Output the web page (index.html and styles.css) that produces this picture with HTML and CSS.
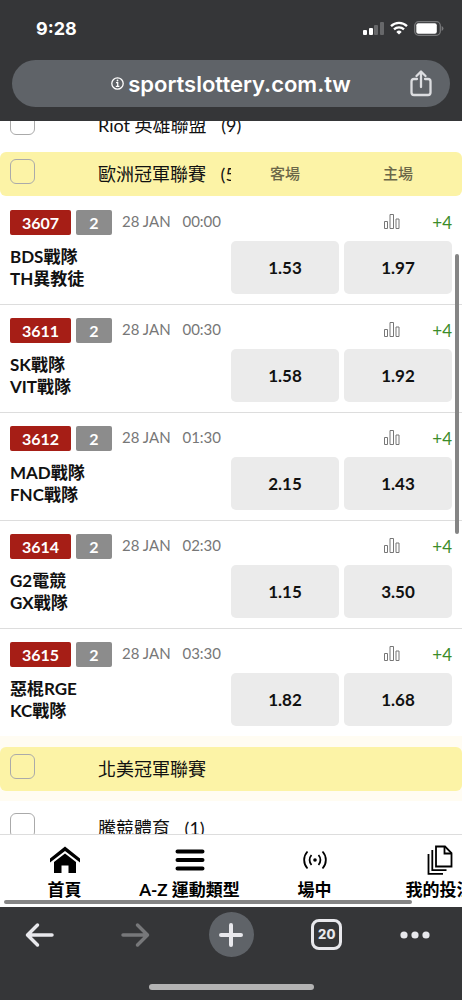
FILE: index.html
```
<!DOCTYPE html>
<html lang="zh-Hant">
<head>
    <meta charset="UTF-8">
    <meta name="viewport" content="width=device-width, initial-scale=1.0">
    <title>台灣運彩</title>
    <link rel="stylesheet" href="styles.css">
</head>
<body>
    <header class="browser-top">
        <div class="status-bar">
            <span class="time">9:28</span>
            <div class="status-icons">
                <svg width="21" height="14" viewBox="0 0 21 14" fill="#fff">
                    <rect x="0" y="9" width="4" height="5" rx="1"/>
                    <rect x="6" y="7" width="4" height="7" rx="1"/>
                    <rect x="11" y="4" width="4" height="10" rx="1" fill="#67686a"/>
                    <rect x="17" y="1" width="4" height="13" rx="1" fill="#67686a"/>
                </svg>
                <svg width="18" height="14" viewBox="0 0 18 14" fill="none" stroke="#fff" stroke-width="2.3">
                    <path d="M1 5.2a11.5 11.5 0 0 1 16 0"/>
                    <path d="M4 8.4a7.2 7.2 0 0 1 10 0"/>
                    <path d="M9 13.6 6.3 10.9a3.9 3.9 0 0 1 5.4 0z" fill="#fff" stroke="none"/>
                </svg>
                <svg width="30" height="15" viewBox="0 0 30 15">
                    <rect x=".7" y=".7" width="25.6" height="13.6" rx="4" fill="none" stroke="#77787a" stroke-width="1.3"/>
                    <rect x="2.3" y="2.3" width="20.5" height="10.4" rx="2" fill="#fff"/>
                    <path d="M27.6 5v5q1.9-.8 1.9-2.5T27.6 5z" fill="#77787a"/>
                </svg>
            </div>
        </div>
        <div class="url-bar">
            <a class="url" href="#">
                <svg width="13" height="13" viewBox="0 0 13 13" fill="none" stroke="#fff" stroke-width="1.3">
                    <circle cx="6.5" cy="6.5" r="5.7"/>
                    <path d="M5 5.6h1.7v3.6M4.8 9.3h3.6"/>
                    <circle cx="6.5" cy="3.5" r=".9" fill="#fff" stroke="none"/>
                </svg>
                <span>sportslottery.com.tw</span>
            </a>
            <button class="share" aria-label="分享">
                <svg width="22" height="27" viewBox="0 0 22 27" fill="none" stroke="#dcdde0" stroke-width="2.3" stroke-linecap="round" stroke-linejoin="round">
                    <path d="M7 9H4q-2.5 0-2.5 2.500v11Q1.5 25 4 25h14q2.500 0 2.500-2.500v-11Q20.500 9 18 9h-3"/>
                    <path d="M11 17V2M6.500 6 11 1.500 15.500 6"/>
                </svg>
            </button>
        </div>
    </header>

    <main class="page">
        <div class="list">
            <section class="league">
                <input type="checkbox" id="league-riot">
                <label for="league-riot">Riot 英雄聯盟 <span class="count">(9)</span></label>
            </section>

            <section class="league active with-odds">
                <input type="checkbox" id="league-eu">
                <label for="league-eu">歐洲冠軍聯賽 <span class="count">(5)</span></label>
                <span class="odds-title">客場</span>
                <span class="odds-title">主場</span>
            </section>

            <div id="matches"></div>

            <div class="highlight">
                <section class="league active">
                    <input type="checkbox" id="league-na">
                    <label for="league-na">北美冠軍聯賽</label>
                </section>
            </div>

            <section class="league">
                <input type="checkbox" id="league-tj">
                <label for="league-tj">騰競體育 <span class="count">(1)</span></label>
            </section>
        </div>
        <div class="scrollbar"></div>
    </main>

    <nav class="tabs">
        <div class="tab-list">
            <a class="tab" href="#">
                <svg width="30" height="28" viewBox="0 0 30 28">
                    <path d="M0 12.5 15 .5l15 12v4L15 5 0 16.5z"/>
                    <path d="M4 16 15 7.5 26 16v11h-7.5v-7.5h-7V27H4z"/>
                </svg>
                <span>首頁</span>
            </a>
            <a class="tab" href="#">
                <svg width="30" height="28" viewBox="0 0 30 28" stroke="#000" stroke-width="4" stroke-linecap="round">
                    <path d="M2.5 5.5h25M2.5 14h25M2.5 22.5h25"/>
                </svg>
                <span>A-Z 運動類型</span>
            </a>
            <a class="tab" href="#">
                <svg width="24" height="28" viewBox="0 0 24 28" fill="none" stroke="#000" stroke-width="1.8">
                    <path d="M4.5 5.5a12.5 12.5 0 0 0 0 17M19.5 5.5a12.5 12.5 0 0 1 0 17"/>
                    <path d="M8.5 9a7.5 7.5 0 0 0 0 10M15.5 9a7.5 7.5 0 0 1 0 10"/>
                    <circle cx="12" cy="14" r="1.8" fill="#000" stroke="none"/>
                </svg>
                <span>場中</span>
            </a>
            <a class="tab" href="#">
                <svg width="26" height="30" viewBox="0 0 26 30" fill="none" stroke="#000" stroke-width="1.8">
                    <path d="M9 1.5h9l6.5 6.5v13.5H9z"/>
                    <path d="M17.5 1.5V8.5h7"/>
                    <path d="M5.3 5v20.2h14.2M1.5 9v19.8h14.5"/>
                </svg>
                <span>我的投注</span>
            </a>
        </div>
        <div class="tab-scroll"></div>
    </nav>

    <footer class="browser-bottom">
        <div class="toolbar">
            <button aria-label="上一頁">
                <svg width="30" height="26" viewBox="0 0 30 26" fill="none" stroke="#e8e8ec" stroke-width="3.5" stroke-linecap="round" stroke-linejoin="round">
                    <path d="M27 13H3M12.5 3 2.5 13l10 10"/>
                </svg>
            </button>
            <button aria-label="下一頁">
                <svg width="30" height="26" viewBox="0 0 30 26" fill="none" stroke="#77787a" stroke-width="3.5" stroke-linecap="round" stroke-linejoin="round">
                    <path d="M3 13h24M17.5 3l10 10-10 10"/>
                </svg>
            </button>
            <button class="new-tab" aria-label="新分頁">
                <svg width="26" height="26" viewBox="0 0 26 26" stroke="#e8e8ec" stroke-width="4" stroke-linecap="round">
                    <path d="M13 3v20M3 13h20"/>
                </svg>
            </button>
            <button aria-label="分頁"><span class="tab-count">20</span></button>
            <button class="menu" aria-label="更多">
                <svg width="30" height="8" viewBox="0 0 30 8" fill="#e8e8ec">
                    <circle cx="4" cy="4" r="3.6"/>
                    <circle cx="15" cy="4" r="3.6"/>
                    <circle cx="26" cy="4" r="3.6"/>
                </svg>
            </button>
        </div>
        <div class="home-indicator"></div>
    </footer>

    <script src="script.js"></script>
</body>
</html>
```
FILE: styles.css
```
:root {
    --chrome: #353638;
    --chrome-light: #5f6368;
    --highlight: #fcf3a6;
    --red: #a61e16;
    --green: #3c8c2a;
}

* {
    box-sizing: border-box;
    margin: 0;
    padding: 0;
}

body {
    display: flex;
    flex-direction: column;
    height: 100vh;
    overflow: hidden;
    font-family: Lato, "Noto Sans CJK TC", sans-serif;
    color: #111;
    background-color: #fff;
}

button {
    border: none;
    background: none;
    font-family: inherit;
    cursor: pointer;
}

a {
    color: inherit;
    text-decoration: none;
}

svg {
    display: block;
}

/* Browser top */
.browser-top {
    flex: none;
    padding: 16px 12px 14px;
    color: #fff;
    background-color: var(--chrome);
    font-family: Inter, sans-serif;
}

.status-bar {
    display: flex;
    align-items: center;
    justify-content: space-between;
    height: 24px;
    padding: 0 6px 0 24px;
    margin-bottom: 20px;
}

.time {
    font-size: 18px;
    font-weight: 700;
}

.status-icons {
    display: flex;
    align-items: center;
    gap: 6px;
}

.url-bar {
    display: flex;
    align-items: center;
    height: 47px;
    padding: 0 18px;
    border-radius: 24px;
    background-color: var(--chrome-light);
}

.url {
    flex: 1;
    display: flex;
    align-items: center;
    justify-content: center;
    gap: 4px;
    padding-left: 22px;
    font-size: 22px;
    font-weight: 600;
}

/* Page */
.page {
    position: relative;
    flex: 1;
    min-height: 0;
    overflow: hidden;
}

/* list is scrolled a little under the browser bar */
.list {
    margin-top: -18px;
}

.league {
    display: flex;
    align-items: center;
    gap: 5px;
    height: 44px;
    padding: 0 10px;
    margin-bottom: 5px;
    border-radius: 6px;
}

.league.active {
    margin-bottom: 0;
    background-color: var(--highlight);
}

.league input {
    appearance: none;
    flex: none;
    align-self: flex-start;
    width: 25px;
    height: 25px;
    margin: 7px 58px 0 0;
    border: 1px solid #aaa;
    border-radius: 6px;
}

.league label {
    flex: 1;
    min-width: 0;
    overflow: hidden;
    white-space: nowrap;
    font-size: 18px;
    line-height: 28px;
}

.with-odds label {
    margin-right: -5px;
}

.count {
    margin-left: 10px;
}

.odds-title {
    flex: none;
    width: 108px;
    padding-bottom: 3px;
    text-align: center;
    font-size: 15px;
    font-weight: 500;
    color: #6b6748;
}

.highlight {
    padding: 11px 0 10px;
    margin-bottom: 5px;
    background-color: #fffcf2;
}

/* Matches */
.match {
    height: 108px;
    padding: 13px 10px 0;
    border-top: 1px solid #ddd;
}

.match:first-child {
    border-top-color: transparent;
}

.match-head {
    display: flex;
    align-items: center;
    gap: 5px;
    height: 25px;
    margin-bottom: 6px;
}

.tag {
    height: 25px;
    border-radius: 2px;
    text-align: center;
    font-size: 16px;
    font-weight: 700;
    line-height: 25px;
    color: #fff;
}

.tag-code {
    width: 61px;
    background-color: var(--red);
}

.tag-num {
    width: 36px;
    background-color: #8c8c8c;
}

.match-date {
    margin-left: 5px;
    padding-bottom: 3px;
    font-size: 15px;
    line-height: 22px;
    color: #777;
}

.match-time {
    margin-left: 8px;
}

.match-side {
    display: flex;
    align-items: center;
    gap: 32px;
    margin-left: auto;
}

.match-side svg {
    margin-bottom: 3px;
}

.more {
    font-size: 17px;
    color: var(--green);
}

.match-body {
    display: flex;
    gap: 5px;
}

.teams {
    flex: 1;
    padding-top: 5px;
    font-size: 17px;
    font-weight: 700;
    line-height: 22px;
}

.odds {
    width: 108px;
    height: 53px;
    border-radius: 5px;
    background-color: #ebebeb;
    color: #111;
    font-size: 17px;
    font-weight: 700;
}

.scrollbar {
    position: absolute;
    top: 133px;
    right: 3px;
    width: 4px;
    height: 280px;
    border-radius: 2px;
    background-color: #858585;
}

/* Tabs */
.tabs {
    position: relative;
    flex: none;
    height: 73px;
    padding-left: 2px;
    border-top: 1px solid #ddd;
    overflow: hidden;
    background-color: #fff;
}

.tab-list {
    display: flex;
}

.tab {
    flex: none;
    display: flex;
    flex-direction: column;
    align-items: center;
    width: 125px;
    padding-top: 10px;
    color: #000;
    font-size: 17px;
    font-weight: 700;
    line-height: 24px;
}

.tab svg {
    height: 30px;
    margin-bottom: 3px;
}

.tab-scroll {
    position: absolute;
    left: 4px;
    right: 50px;
    bottom: 3px;
    height: 4px;
    border-radius: 2px;
    background-color: #858585;
}

/* Browser bottom */
.browser-bottom {
    flex: none;
    height: 93px;
    padding-top: 5px;
    background-color: var(--chrome);
}

.toolbar {
    display: flex;
    align-items: center;
    justify-content: space-between;
    padding: 0 17px;
}

.toolbar button {
    display: flex;
    align-items: center;
    justify-content: center;
    width: 45px;
    height: 45px;
    border-radius: 50%;
}

.toolbar .new-tab {
    background-color: var(--chrome-light);
}

.toolbar .menu {
    justify-content: flex-start;
}

.tab-count {
    width: 31px;
    height: 31px;
    border: 3px solid #e8e8ec;
    border-radius: 8px;
    color: #e8e8ec;
    font-family: Inter, sans-serif;
    font-size: 13px;
    font-weight: 800;
    line-height: 25px;
    text-align: center;
}

.home-indicator {
    width: 165px;
    height: 6px;
    margin: 27px auto 0;
    border-radius: 3px;
    background-color: #b3b3b3;
}
```
FILE: script.js
```
const matches = [
    { code: "3607", time: "00:00", away: "BDS戰隊", home: "TH異教徒", odds: ["1.53", "1.97"] },
    { code: "3611", time: "00:30", away: "SK戰隊", home: "VIT戰隊", odds: ["1.58", "1.92"] },
    { code: "3612", time: "01:30", away: "MAD戰隊", home: "FNC戰隊", odds: ["2.15", "1.43"] },
    { code: "3614", time: "02:30", away: "G2電競", home: "GX戰隊", odds: ["1.15", "3.50"] },
    { code: "3615", time: "03:30", away: "惡棍RGE", home: "KC戰隊", odds: ["1.82", "1.68"] }
];

document.getElementById("matches").innerHTML = matches.map(match => `
    <article class="match">
        <div class="match-head">
            <span class="tag tag-code">${match.code}</span>
            <span class="tag tag-num">2</span>
            <span class="match-date">28 JAN <span class="match-time">${match.time}</span></span>
            <div class="match-side">
                <svg width="16" height="16" viewBox="0 0 16 16" fill="none" stroke="#777">
                    <path d="M.5 8.500h3v7h-3zM6 1.500h3.500v14H6zM12 6h3v9.500h-3z"/>
                </svg>
                <a class="more" href="#">+4</a>
            </div>
        </div>
        <div class="match-body">
            <div class="teams">
                <p>${match.away}</p>
                <p>${match.home}</p>
            </div>
            ${match.odds.map(value => `<button class="odds">${value}</button>`).join("")}
        </div>
    </article>
`).join("");
```
